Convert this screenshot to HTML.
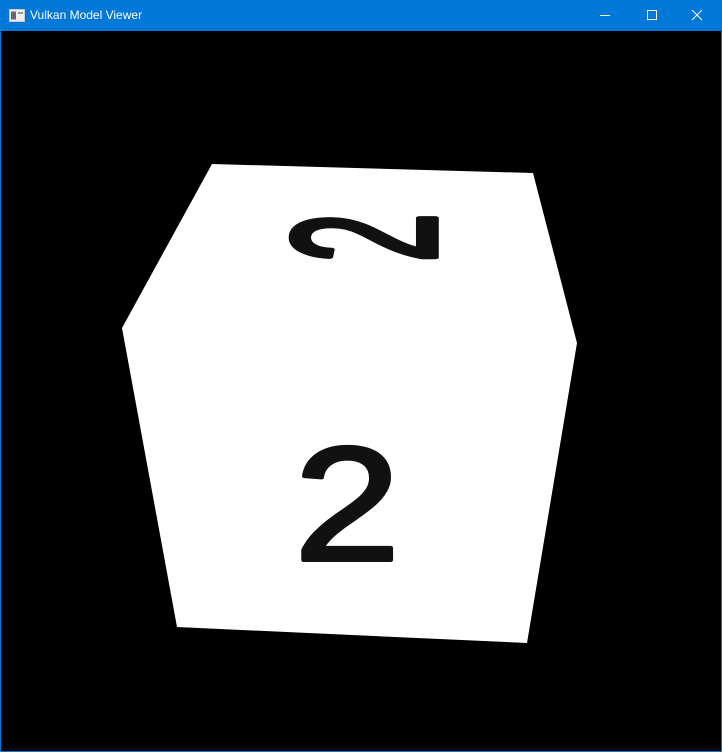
<!DOCTYPE html>
<html><head><style>
html,body{margin:0;padding:0;width:722px;height:752px;overflow:hidden;background:#0078d7;font-family:"Liberation Sans",sans-serif}
#tb{position:absolute;left:0;top:0;width:722px;height:31px;background:#0078d7;color:#fff}
#tb .t{position:absolute;left:30px;top:8px;font-size:12px}
#content{position:absolute;left:1px;top:31px;width:720px;height:720px;background:#000}
</style></head><body>
<div id="tb">
<svg style="position:absolute;left:9px;top:9px" width="16" height="13"><rect x="0.5" y="0.5" width="15" height="12" fill="#eee" stroke="#ccc"/><rect x="2" y="2.5" width="5" height="8" fill="#667"/><rect x="9" y="3" width="5" height="2" fill="#999"/></svg>
<span class="t">Vulkan Model Viewer</span>
<svg style="position:absolute;left:600px;top:10px" width="110" height="12">
<line x1="0" y1="5.5" x2="10" y2="5.5" stroke="#fff"/>
<rect x="47.5" y="0.5" width="9" height="9" fill="none" stroke="#fff"/>
<line x1="92" y1="0" x2="102" y2="10" stroke="#fff"/><line x1="102" y1="0" x2="92" y2="10" stroke="#fff"/>
</svg>
</div>
<div id="content"></div>
<svg style="position:absolute;left:0;top:0" width="722" height="752">
<polygon points="212,164 533,173 577,343 527,643 177,627 122,328" fill="#fff"/>
<text x="0" y="0" font-size="162" font-family="Liberation Sans" fill="#111" stroke="#111" stroke-width="4" stroke-linejoin="round" transform="translate(294,560) scale(1.18,1)">2</text>
<text x="0" y="0" font-size="162" font-family="Liberation Sans" fill="#111" stroke="#111" stroke-width="6" stroke-linejoin="round" transform="translate(435,262) scale(1.26,0.54) rotate(-90)">2</text>
</svg>
</body></html>
